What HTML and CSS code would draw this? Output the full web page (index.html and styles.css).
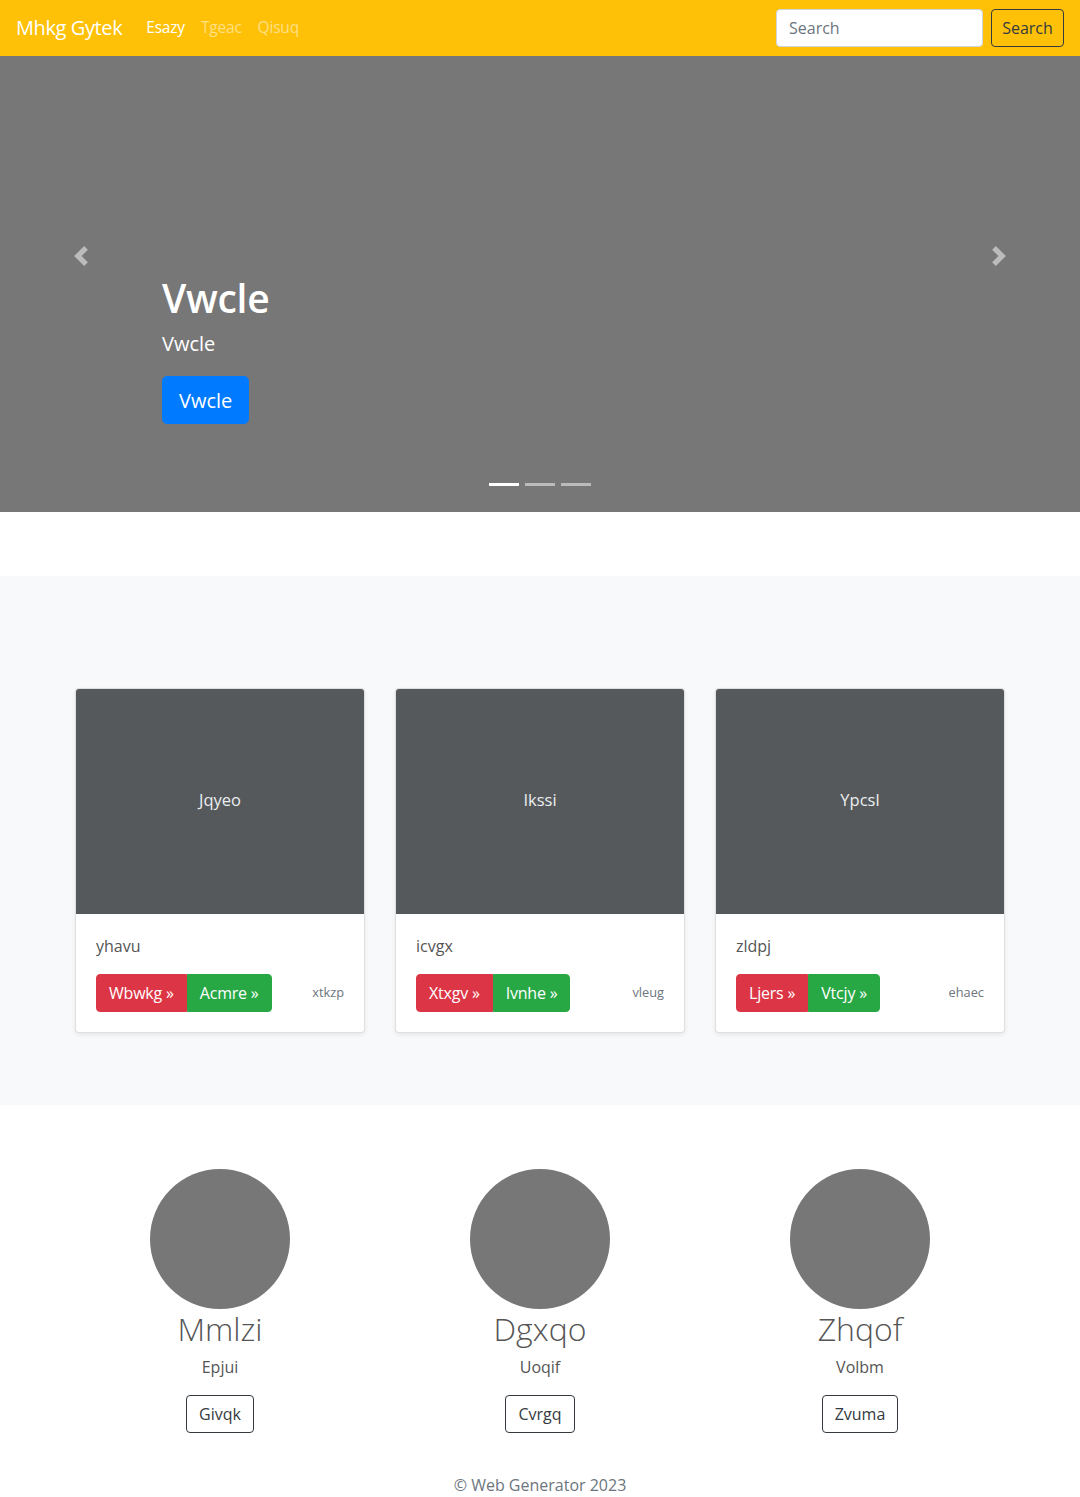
FILE: index.html
```html
<!DOCTYPE html>
<html lang="en">
<head>
<meta charset="utf-8">
<title>Mhkg Gytek</title>
<link rel="stylesheet" href="styles.css">
</head>
<body>
<header class="navbar">
  <a class="brand" href="#">Mhkg Gytek</a>
  <nav class="nav">
    <a class="nav-link active" href="#">Esazy</a>
    <a class="nav-link" href="#">Tgeac</a>
    <a class="nav-link" href="#">Qisuq</a>
  </nav>
  <form class="search">
    <input class="search-input" type="text" placeholder="Search">
    <button class="search-btn" type="button">Search</button>
  </form>
</header>

<main>
  <section class="carousel">
    <div class="caption">
      <h1 class="caption-title">Vwcle</h1>
      <p class="caption-text">Vwcle</p>
      <a class="btn-lg" href="#">Vwcle</a>
    </div>
    <a class="control control-prev" href="#">
      <svg width="20" height="20" viewBox="0 0 8 8" fill="#fff"><path d="M5.25 0l-4 4 4 4 1.5-1.5L4.25 4l2.5-2.5L5.25 0z"/></svg>
    </a>
    <a class="control control-next" href="#">
      <svg width="20" height="20" viewBox="0 0 8 8" fill="#fff"><path d="M2.75 0l-1.5 1.5L3.75 4l-2.5 2.5L2.75 8l4-4-4-4z"/></svg>
    </a>
    <ol class="indicators">
      <li class="active"></li>
      <li></li>
      <li></li>
    </ol>
  </section>

  <section class="album">
    <div class="container cards">
      <div class="card">
        <div class="thumb">Jqyeo</div>
        <div class="card-body">
          <p class="card-text">yhavu</p>
          <div class="card-row">
            <div class="btn-group">
              <a class="btn btn-danger" href="#">Wbwkg »</a>
              <a class="btn btn-success" href="#">Acmre »</a>
            </div>
            <small class="muted">xtkzp</small>
          </div>
        </div>
      </div>
      <div class="card">
        <div class="thumb">Ikssi</div>
        <div class="card-body">
          <p class="card-text">icvgx</p>
          <div class="card-row">
            <div class="btn-group">
              <a class="btn btn-danger" href="#">Xtxgv »</a>
              <a class="btn btn-success" href="#">Ivnhe »</a>
            </div>
            <small class="muted">vleug</small>
          </div>
        </div>
      </div>
      <div class="card">
        <div class="thumb">Ypcsl</div>
        <div class="card-body">
          <p class="card-text">zldpj</p>
          <div class="card-row">
            <div class="btn-group">
              <a class="btn btn-danger" href="#">Ljers »</a>
              <a class="btn btn-success" href="#">Vtcjy »</a>
            </div>
            <small class="muted">ehaec</small>
          </div>
        </div>
      </div>
    </div>
  </section>

  <section class="container marketing">
    <div class="person">
      <div class="avatar"></div>
      <h2 class="person-name">Mmlzi</h2>
      <p class="person-role">Epjui</p>
      <a class="btn btn-outline" href="#">Givqk</a>
    </div>
    <div class="person">
      <div class="avatar"></div>
      <h2 class="person-name">Dgxqo</h2>
      <p class="person-role">Uoqif</p>
      <a class="btn btn-outline" href="#">Cvrgq</a>
    </div>
    <div class="person">
      <div class="avatar"></div>
      <h2 class="person-name">Zhqof</h2>
      <p class="person-role">Volbm</p>
      <a class="btn btn-outline" href="#">Zvuma</a>
    </div>
  </section>
</main>

<footer class="footer">
  <p>© Web Generator 2023</p>
</footer>
</body>
</html>
```

FILE: styles.css
```css
* { box-sizing: border-box; }

html, body {
  margin: 0;
  padding: 0;
}

body {
  font-family: "Open Sans", "Noto Sans", "Liberation Sans", sans-serif;
  font-size: 16px;
  line-height: 1.5;
  color: #555;
  background: #fff;
}

a { text-decoration: none; }

/* Navbar */
.navbar {
  position: fixed;
  top: 0;
  left: 0;
  right: 0;
  z-index: 100;
  height: 56px;
  display: flex;
  align-items: center;
  padding: 0 16px;
  background: #ffc107;
}

.brand {
  font-size: 20px;
  line-height: 30px;
  color: #fff;
  margin-right: 16px;
  letter-spacing: -0.4px;
}

.nav {
  display: flex;
  flex: 1;
}

.nav-link {
  padding: 8px;
  color: rgba(255, 255, 255, 0.5);
  font-size: 15.5px;
  letter-spacing: -0.2px;
}

.nav-link.active { color: #fff; }

.search {
  display: flex;
  align-items: center;
  gap: 8px;
}

.search-input {
  width: 207px;
  height: 38px;
  padding: 6px 12px;
  font: inherit;
  color: #495057;
  background: #fff;
  border: 1px solid #ced4da;
  border-radius: 4px;
}

.search-input::placeholder { color: #6c757d; }

.search-btn {
  width: 73px;
  height: 38px;
  padding: 6px 0;
  font: inherit;
  color: #343a40;
  background: transparent;
  border: 1px solid #343a40;
  border-radius: 4px;
}

/* Carousel */
.carousel {
  position: relative;
  height: 512px;
  background: #777;
  margin-bottom: 64px;
  overflow: hidden;
}

.caption {
  position: absolute;
  left: 15%;
  right: 15%;
  bottom: 52px;
  padding: 20px 0;
  color: #fff;
}

.caption-title {
  margin: 0 0 8px;
  font-size: 39px;
  font-weight: 600;
  line-height: 48px;
  letter-spacing: -0.3px;
}

.caption-text {
  margin: 0 0 18px;
  font-size: 20px;
  line-height: 28px;
}

.btn-lg {
  display: inline-block;
  height: 48px;
  padding: 9px 16px 7px;
  font-size: 20px;
  line-height: 30px;
  color: #fff;
  background: #007bff;
  border: 1px solid #007bff;
  border-radius: 5px;
  margin-bottom: 16px;
  vertical-align: top;
}

.control {
  position: absolute;
  top: 0;
  bottom: 0;
  width: 15%;
  display: flex;
  align-items: center;
  justify-content: center;
  opacity: 0.5;
}

.control-prev { left: 0; }
.control-next { right: 0; }

.indicators {
  position: absolute;
  left: 0;
  right: 0;
  bottom: 16px;
  margin: 0;
  padding: 0;
  list-style: none;
  display: flex;
  justify-content: center;
}

.indicators li {
  width: 30px;
  height: 23px;
  margin: 0 3px;
  background: #fff;
  background-clip: padding-box;
  border-top: 10px solid transparent;
  border-bottom: 10px solid transparent;
  opacity: 0.5;
}

.indicators li.active { opacity: 1; }

/* Album */
.container {
  width: 960px;
  margin: 0 auto;
  padding: 0 15px;
}

.album {
  background: #f8f9fa;
  padding: 112px 0 48px;
}

.cards {
  display: grid;
  grid-template-columns: repeat(3, 1fr);
  column-gap: 30px;
}

.card {
  margin-bottom: 24px;
  background: #fff;
  border: 1px solid rgba(0, 0, 0, 0.125);
  border-radius: 4px;
  box-shadow: 0 2px 4px rgba(0, 0, 0, 0.075);
  overflow: hidden;
}

.thumb {
  height: 225px;
  display: flex;
  align-items: center;
  justify-content: center;
  padding-bottom: 3px;
  background: #55595c;
  color: #eceeef;
  font-size: 16.5px;
}

.card-body {
  padding: 20px;
}

.card-text {
  margin: 0 0 16px;
}

.card-row {
  display: flex;
  align-items: center;
  justify-content: space-between;
}

.btn-group {
  display: flex;
}

.btn {
  display: inline-block;
  height: 38px;
  padding: 6px 12px;
  font-size: 16px;
  line-height: 24px;
  border: 1px solid transparent;
}

.btn-group .btn { letter-spacing: -0.2px; }

.btn-danger {
  color: #fff;
  background: #dc3545;
  border-color: #dc3545;
  border-radius: 4px 0 0 4px;
}

.btn-success {
  color: #fff;
  background: #28a745;
  border-color: #28a745;
  border-radius: 0 4px 4px 0;
}

.muted {
  font-size: 12.8px;
  color: #6c757d;
}

/* Marketing */
.marketing {
  display: grid;
  grid-template-columns: repeat(3, 1fr);
  column-gap: 30px;
  padding-top: 64px;
  text-align: center;
}

.person {
  display: flex;
  flex-direction: column;
  align-items: center;
  margin-bottom: 24px;
}

.avatar {
  width: 140px;
  height: 140px;
  border-radius: 50%;
  background: #777;
}

.person-name {
  margin: 1px 0 7px;
  font-size: 32px;
  font-weight: 300;
  line-height: 1.2;
  color: #555;
}

.person-role {
  margin: 0 0 16px;
}

.btn-outline {
  color: #343a40;
  background: transparent;
  border-color: #343a40;
  border-radius: 4px;
}

/* Footer */
.footer {
  text-align: center;
  padding: 16px 0;
  color: #6c757d;
}

.footer p { margin: 0; }
```
